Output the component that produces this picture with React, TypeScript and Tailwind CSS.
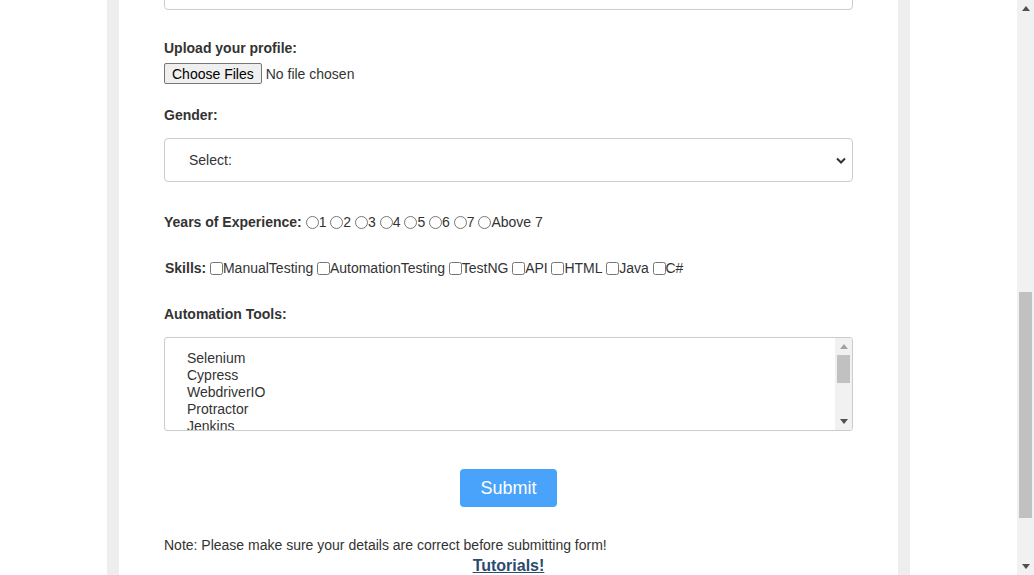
import React from 'react';

const years = ['1', '2', '3', '4', '5', '6', '7', 'Above 7'];
const skills = ['ManualTesting', 'AutomationTesting', 'TestNG', 'API', 'HTML', 'Java', 'C#'];
const tools = ['Selenium', 'Cypress', 'WebdriverIO', 'Protractor', 'Jenkins'];

function Arrow({ up, color }: { up?: boolean; color: string }) {
  return (
    <svg width="8" height="5" viewBox="0 0 8 5">
      <path d={up ? 'M0 5 L4 0 L8 5 Z' : 'M0 0 L8 0 L4 5 Z'} fill={color} />
    </svg>
  );
}

function Label({ children }: { children: React.ReactNode }) {
  return <div className="text-[14px] leading-[16px] font-bold text-[#333]">{children}</div>;
}

export default function App() {
  return (
    <div className="flex h-[575px] overflow-hidden bg-white font-['Liberation_Sans',Arial,sans-serif] text-[#333]">
      <div className="flex flex-1 justify-center">
        <div className="w-[803px] bg-[#eee] px-[12px]">
          <div className="flow-root h-full bg-white px-[45px]">
            {/* tail of the field above, scrolled out of view */}
            <div className="-mt-[34px] h-[44px] rounded-[4px] border border-[#ccc]" />

            <div className="mt-[30px]">
              <Label>Upload your profile:</Label>
            </div>
            <div className="mt-[7px] flex items-center text-[14px]">
              <button className="flex h-[21px] items-center rounded-[2px] border border-[#767676] bg-[#efefef] px-[7px] leading-[16px] text-black">
                Choose Files
              </button>
              <span className="ml-[4px] leading-[16px] text-[#333]">No file chosen</span>
            </div>

            <div className="mt-[23px]">
              <Label>Gender:</Label>
            </div>
            <div className="mt-[15px] flex h-[44px] items-center justify-between rounded-[4px] border border-[#ccc] pl-[24px] pr-[6px] text-[14px]">
              <span className="text-[#333]">Select:</span>
              <svg width="10" height="7" viewBox="0 0 10 7">
                <path d="M1 1.5 L5 5.5 L9 1.5" fill="none" stroke="#333" strokeWidth="2" />
              </svg>
            </div>

            <div className="mt-[32px] flex h-[16px] items-center text-[14px] leading-[16px]">
              <span className="font-bold">Years of Experience:</span>
              {years.map((y) => (
                <label key={y} className="ml-[3.9px] flex items-center">
                  <input type="radio" name="exp" className="h-[13px] w-[13px]" />
                  <span>{y}</span>
                </label>
              ))}
            </div>

            <div className="mt-[30px] flex h-[16px] items-center text-[14px] leading-[16px]">
              <span className="ml-[1px] font-bold">Skills:</span>
              {skills.map((s) => (
                <label key={s} className="ml-[3.7px] flex items-center">
                  <input type="checkbox" className="h-[13px] w-[13px]" />
                  <span>{s}</span>
                </label>
              ))}
            </div>

            <div className="mt-[30px]">
              <Label>Automation Tools:</Label>
            </div>
            <div className="mt-[15px] flex h-[94px] overflow-hidden rounded-[3px] border border-[#ccc]">
              <div className="flex-1 overflow-hidden pl-[22px] pt-[12px] text-[14px] leading-[17px] text-[#333]">
                {tools.map((t) => (
                  <div key={t}>{t}</div>
                ))}
              </div>
              <div className="flex w-[17px] flex-col bg-[#f1f1f1]">
                <div className="flex h-[17px] items-center justify-center">
                  <Arrow up color="#a3a3a3" />
                </div>
                <div className="mx-[2px] h-[28px] bg-[#c1c1c1]" />
                <div className="flex-1" />
                <div className="flex h-[17px] items-center justify-center">
                  <Arrow color="#505050" />
                </div>
              </div>
            </div>

            <button className="mx-auto mt-[38px] block h-[38px] w-[97px] rounded-[4px] bg-[#4aa3fa] text-[18px] leading-[34px] text-white">
              Submit
            </button>

            <p className="mt-[30px] text-[14px] leading-[16px] text-[#333]">
              Note: Please make sure your details are correct before submitting form!
            </p>
            <div className="mt-[4px] text-center text-[16px] leading-[18px]">
              <a href="#" className="font-bold text-[#2a4b6e] underline">
                Tutorials!
              </a>
            </div>
          </div>
        </div>
      </div>

      {/* page scrollbar */}
      <div className="flex w-[17px] flex-col bg-[#f1f1f1]">
        <div className="flex h-[17px] items-center justify-center">
          <Arrow up color="#505050" />
        </div>
        <div className="mx-[2px] mt-[275px] h-[226px] bg-[#c1c1c1]" />
        <div className="flex-1" />
        <div className="flex h-[17px] items-center justify-center">
          <Arrow color="#505050" />
        </div>
      </div>
    </div>
  );
}
